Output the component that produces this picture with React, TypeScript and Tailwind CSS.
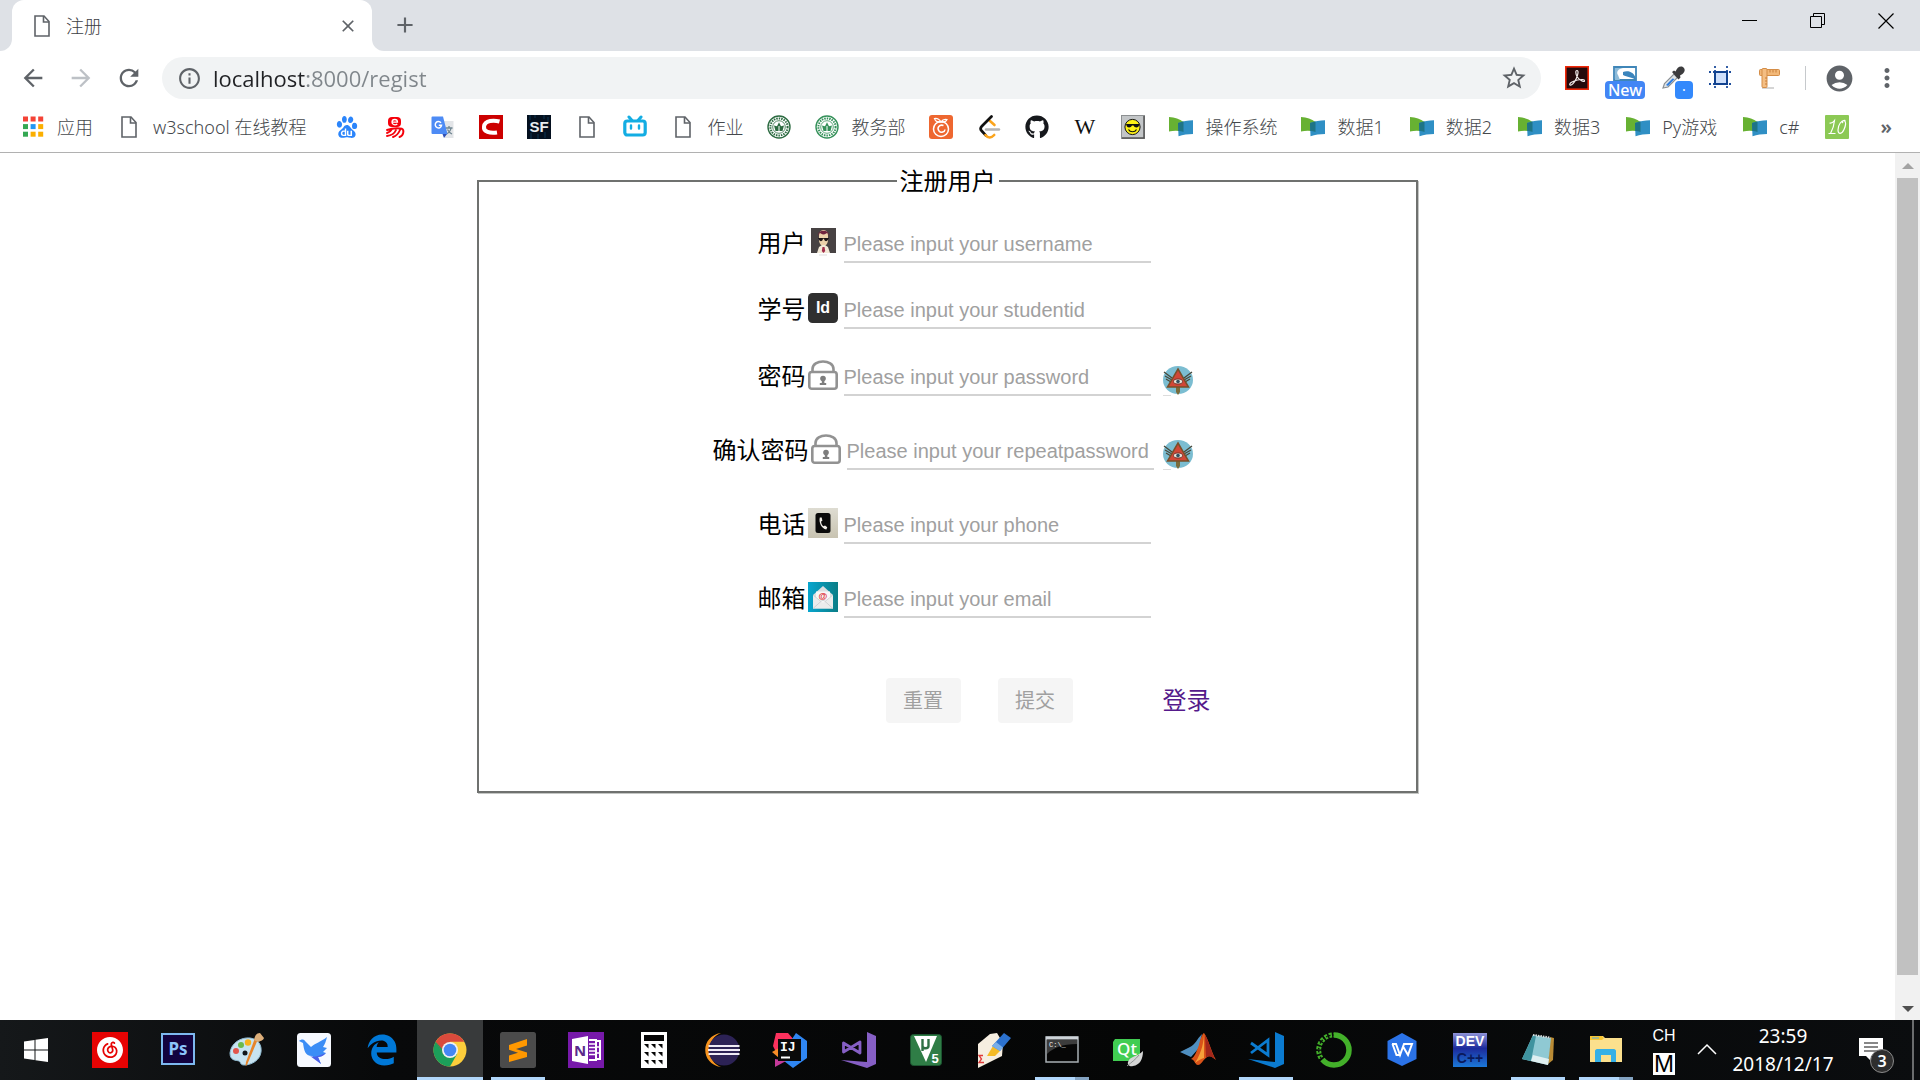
import type { ReactNode } from 'react';
import {
  MdAccountCircle,
  MdAdd,
  MdArrowBack,
  MdArrowForward,
  MdClose,
  MdInfoOutline,
  MdMoreVert,
  MdRefresh,
  MdStarBorder,
} from 'react-icons/md';
import { FaGithub } from 'react-icons/fa';
import { FaEdgeLegacy } from 'react-icons/fa6';
import { SiBaidu, SiNeteasecloudmusic } from 'react-icons/si';

function Svg({ size = 24, box = 24, children }: { size?: number; box?: number; children: ReactNode }) {
  return (
    <svg width={size} height={size} viewBox={`0 0 ${box} ${box}`} fill="none" aria-hidden="true">
      {children}
    </svg>
  );
}

/* ---------- bookmark icons ---------- */

const PageIcon = () => (
  <Svg>
    <path d="M5 2h9l5 5.5V22H5z" stroke="#5f6368" strokeWidth="1.6" />
    <path d="M13.5 2v6H19" stroke="#5f6368" strokeWidth="1.6" />
  </Svg>
);

const AppsIcon = () => {
  const colors = ['#f44336', '#f44336', '#f44336', '#34a853', '#2196f3', '#fbaf00', '#34a853', '#fbaf00', '#fbaf00'];
  return (
    <Svg>
      {colors.map((c, i) => (
        <rect key={i} x={2 + (i % 3) * 7.6} y={1.5 + Math.floor(i / 3) * 7.6} width="5" height="5" fill={c} />
      ))}
    </Svg>
  );
};

const YiIcon = () => (
  <Svg>
    <rect x="5" y="2" width="13" height="10" rx="4" fill="#f5000a" />
    <path d="M9 7.200h5.500c0-3.600-5.500-3.600-5.500 0 0 2.800 3.500 3.300 5.300 1.800" stroke="#fff" strokeWidth="1.300" />
    <path
      d="M4 15c4.500-1.500 11-2 15-1.200 2.500 1.200 1.500 7-2.500 8.200M9 14c-1 2-2.500 3.200-5 4M13 15c-1.500 3.500-5 5.500-9 6M17 15c-1.500 3.500-4 6-7 7"
      stroke="#f5000a"
      strokeWidth="1.900"
      strokeLinecap="round"
    />
  </Svg>
);

const TranslateIcon = () => (
  <Svg>
    <path d="M10 6h12.500v17H14z" fill="#e3e5e8" />
    <path d="M14.500 13h7M18 11v2M20 13c-.5 3-2.500 5-4.500 6M16.500 14.500c1 2 2.500 3.500 4.500 4.500" stroke="#6f8590" strokeWidth="1.300" />
    <path d="M11.500 19h4.500l-3 4z" fill="#2f4fb5" />
    <path d="M1.500 1.500h10.500l4.500 17.500H1.500a1 1 0 0 1-1-1v-15.500a1 1 0 0 1 1-1z" fill="#4d8bf5" />
    <path d="M10 7.800a3.200 3.200 0 1 0 .6 2.400H7.800" stroke="#fff" strokeWidth="1.400" />
  </Svg>
);

const CIcon = () => (
  <Svg>
    <rect width="24" height="24" fill="#cc0000" />
    <path d="M20.500 6.500C15 5 6 5 5 11.500c-.8 5.500 6 7 13 6" stroke="#fff" strokeWidth="4" />
  </Svg>
);

const SfIcon = () => (
  <Svg>
    <rect width="24" height="24" fill="#04101f" />
    <path d="M3 0v5M8 0v3M17 0v4M21 2v6M4 18v6M11 19v5M18 17v6" stroke="#0d3553" />
    <text x="12" y="17" textAnchor="middle" fontFamily="Liberation Sans" fontWeight="700" fontSize="15" fill="#e9edf0">
      SF
    </text>
  </Svg>
);

const BiliIcon = () => (
  <Svg>
    <path d="M6 2l3 3.500M18 2l-3 3.500" stroke="#13ade3" strokeWidth="3" strokeLinecap="round" />
    <rect x="1.800" y="6" width="20.400" height="14" rx="2.500" stroke="#13ade3" strokeWidth="3.200" />
    <path d="M8 10.500v3M16 10.500v3" stroke="#13ade3" strokeWidth="2.400" strokeLinecap="round" />
  </Svg>
);

const SealIcon = ({ color }: { color: string }) => (
  <Svg>
    <circle cx="12" cy="12" r="11" stroke={color} strokeWidth="1.400" />
    <circle cx="12" cy="12" r="8.600" stroke={color} strokeWidth="2" strokeDasharray="1.500 1" />
    <circle cx="12" cy="12" r="6.300" stroke={color} strokeWidth=".8" />
    <path d="M7 10.500l3 .8 2-4 2 4 3-.8-1.500 5.500h-7z" fill={color} />
    <path d="M12 11v5" stroke="#fff" />
  </Svg>
);

const FruitIcon = () => (
  <Svg>
    <rect width="24" height="24" rx="3" fill="#ee6730" />
    <circle cx="12" cy="14" r="7.500" stroke="#fff" strokeWidth="1.500" />
    <path d="M5.500 3.500c3.500-.5 5 1 6.500 3.500 1.500-2.500 3.500-3 6-2.500-1 2.500-3 3-6 2.500-3 .5-5.500-.5-6.500-3.500z" stroke="#fff" strokeWidth="1.200" />
    <path d="M14.500 10.500c-4-1.500-7 2.500-4.500 5.500 2 2.300 5.800 1 6-1.500" stroke="#fff" strokeWidth="1.500" />
  </Svg>
);

const LeetIcon = () => (
  <Svg>
    <path d="M13 6l4.500 4" stroke="#fba41c" strokeWidth="2.600" strokeLinecap="round" />
    <path d="M9 14.500h13" stroke="#b3b3b3" strokeWidth="2.400" strokeLinecap="round" />
    <path d="M14.500 1.500L4.800 11.300c-1.500 1.500-1.500 3.200 0 4.700l4 4.300" stroke="#111" strokeWidth="2.700" strokeLinecap="round" />
    <path d="M8.500 20c2.500 3.500 6 3 8.700 0" stroke="#fba41c" strokeWidth="2.600" strokeLinecap="round" />
  </Svg>
);

const WikiIcon = () => (
  <Svg>
    <text x="12" y="19" textAnchor="middle" fontFamily="Liberation Serif" fontSize="22" fill="#111">
      W
    </text>
  </Svg>
);

const SmileyIcon = () => (
  <Svg>
    <rect x=".5" y=".5" width="23" height="23" fill="#c3c6c8" stroke="#8d9092" />
    <path d="M1 23h22V1" stroke="#555" strokeWidth="1.500" />
    <circle cx="11.500" cy="12" r="7.600" fill="#fdf116" stroke="#111" />
    <path d="M5 9h13v1.500c-.5 2.500-4.500 2.500-5.500 0h-1.500c-1 2.500-5 2.500-5.500 0z" fill="#111" />
    <path d="M7.500 14.500c1.500 3 6.500 3 8 0" stroke="#111" strokeWidth="1.200" />
  </Svg>
);

const BookIcon = () => (
  <Svg>
    <path d="M0 2c6 .5 10.500 2 14.500 5v10C10 15.500 5 15.500 0 16.500z" fill="#67b132" />
    <path d="M9 8c5-2 10-2.500 15-2.800V19c-5 0-10 .800-14.500 2.200z" fill="#2f8fc4" />
    <path d="M9 8l5.500-1.600V17c-2-.8-3.500-1-5.300-1z" fill="#1e7486" />
  </Svg>
);

const TenIcon = () => (
  <Svg>
    <rect width="24" height="24" rx="1" fill="#8cc955" />
    <path d="M4.500 8c2 .5 3.500-.5 5-2.500C9 11 7.500 15 5.500 18.500M3.500 18.500h7" stroke="#fff" strokeWidth="1.200" />
    <path d="M20.500 5.500c-4-1-7.500 4.500-7.500 9.500 0 5 4 4 6-.5 1.800-4 2.500-8 0-9-1.500 0-2 1.500-1 2.500" stroke="#fff" strokeWidth="1.200" />
  </Svg>
);

const bookmarks: { label?: string; name: string; icon: ReactNode; pad?: string }[] = [
  { label: '应用', name: 'Apps', icon: <AppsIcon /> },
  { label: 'w3school 在线教程', name: 'w3school', icon: <PageIcon />, pad: 'pr-[5px]' },
  { name: 'Baidu', icon: <SiBaidu size={22} color="#2b85fb" /> },
  { name: 'Yi', icon: <YiIcon /> },
  { name: 'Translate', icon: <TranslateIcon /> },
  { name: 'C', icon: <CIcon /> },
  { name: 'SegmentFault', icon: <SfIcon /> },
  { name: 'Page', icon: <PageIcon /> },
  { name: 'Bilibili', icon: <BiliIcon /> },
  { label: '作业', name: 'Homework', icon: <PageIcon /> },
  { name: 'University', icon: <SealIcon color="#2c6b41" /> },
  { label: '教务部', name: 'Academic affairs', icon: <SealIcon color="#35915a" /> },
  { name: 'Pomegranate', icon: <FruitIcon /> },
  { name: 'LeetCode', icon: <LeetIcon /> },
  { name: 'GitHub', icon: <FaGithub size={24} color="#16181c" /> },
  { name: 'Wikipedia', icon: <WikiIcon /> },
  { name: 'Smiley', icon: <SmileyIcon /> },
  { label: '操作系统', name: 'Operating systems', icon: <BookIcon /> },
  { label: '数据1', name: 'Data 1', icon: <BookIcon />, pad: 'pr-0.5' },
  { label: '数据2', name: 'Data 2', icon: <BookIcon />, pad: 'pr-0.5' },
  { label: '数据3', name: 'Data 3', icon: <BookIcon />, pad: 'pr-0.5' },
  { label: 'Py游戏', name: 'Py games', icon: <BookIcon />, pad: 'pr-0.5' },
  { label: 'c#', name: 'C sharp', icon: <BookIcon />, pad: 'pr-0.5' },
  { name: 'Ten', icon: <TenIcon /> },
];

/* ---------- browser chrome ---------- */

function TabStrip() {
  return (
    <header className="flex h-[51px] bg-white">
      <div className="w-3 rounded-br-xl bg-[#dee1e6]" />
      <div className="bg-[#dee1e6]">
        <div className="flex h-full w-[360px] items-center rounded-t-xl bg-white pr-[14px] pl-[18px] text-lg text-[#3c4043]">
          <PageIcon />
          <span className="ml-3 flex-1 font-light">注册</span>
          <button aria-label="Close tab" className="text-[#5f6368]">
            <MdClose size={20} />
          </button>
        </div>
      </div>
      <div className="flex flex-1 items-start justify-between rounded-bl-xl bg-[#dee1e6]">
        <button aria-label="New tab" className="mt-3 ml-5 text-[#5f6368]">
          <MdAdd size={26} />
        </button>
        <div className="flex text-black">
          <button aria-label="Minimize" className="flex h-[42px] w-[68px] items-center justify-center">
            <Svg size={16} box={16}>
              <path d="M0 7.500h15" stroke="currentColor" />
            </Svg>
          </button>
          <button aria-label="Restore" className="flex h-[42px] w-[68px] items-center justify-center">
            <Svg size={16} box={16}>
              <path d="M.5 3.500h11v11H.5zM3.500 3.500v-3h11v11h-3" stroke="currentColor" />
            </Svg>
          </button>
          <button aria-label="Close" className="flex h-[42px] w-[68px] items-center justify-center">
            <Svg size={16} box={16}>
              <path d="M.5.5l15 15M15.500.5l-15 15" stroke="currentColor" strokeWidth="1.200" />
            </Svg>
          </button>
        </div>
      </div>
    </header>
  );
}

function Toolbar() {
  return (
    <div className="flex h-[54px] items-center bg-white pl-[19px] text-[#5f6368]">
      <button aria-label="Back">
        <MdArrowBack size={28} />
      </button>
      <button aria-label="Forward" className="ml-5 text-[#bdc1c6]">
        <MdArrowForward size={28} />
      </button>
      <button aria-label="Reload" className="ml-5">
        <MdRefresh size={28} />
      </button>
      <div className="ml-[19px] flex h-[42px] flex-1 items-center rounded-full bg-[#f1f3f4] pr-[13px] pl-[15px]">
        <MdInfoOutline size={25} />
        <input
          aria-label="Address"
          defaultValue="localhost:8000/regist"
          className="ml-[11px] min-w-0 flex-1 bg-[linear-gradient(90deg,#202124_94px,#80868b_94px)] bg-clip-text font-['Open_Sans'] text-[22px] text-transparent outline-none"
        />
        <button aria-label="Bookmark this page">
          <MdStarBorder size={28} />
        </button>
      </div>
      <div className="flex items-center gap-6 pl-6">
        <button aria-label="Acrobat">
          <Svg>
            <rect x=".8" y=".8" width="22.400" height="22.400" fill="#24090b" stroke="#f02708" strokeWidth="1.600" />
            <path
              d="M5 19c-1.500-1.500 3-4 7.500-5 4-.9 7.500-.5 7 1-.6 1.600-5-.8-7.200-4C10.500 8 10.300 4.500 12 4.500s1.200 3.800-.7 8C9.500 16.500 6.500 20 5 19z"
              stroke="#f0e9e9"
              strokeWidth="1.200"
            />
          </Svg>
        </button>
        <button aria-label="Snapshot" className="relative">
          <Svg>
            <path d="M1 1h22v13H1z" fill="#fff" stroke="#3f86b8" strokeWidth="1.800" />
            <path d="M2 2h8C5 3 3 6 5 9l2 5H2z" fill="#8dbbd9" />
            <path d="M10 6c5-2 12 0 13 8-4-3-9-3-13-5z" fill="#3b85bd" />
          </Svg>
          <span className="absolute top-[15px] left-[-8px] h-[18px] w-[40px] rounded-sm bg-[#4286f5] text-center font-['Noto_Sans'] text-base leading-[18px] font-medium text-white">
            New
          </span>
        </button>
        <button aria-label="Colour picker" className="relative">
          <Svg>
            <path d="M2 22l1.500-4.500L13 8l3.500 3.500L7 21z" fill="#dfe5e9" stroke="#8b9094" strokeWidth="1.200" />
            <path d="M5 19l6.500-6.500 2 .5L7 20z" fill="#2e7de0" />
            <path d="M11 6l2-1.500 1.500 1C16 2 18 0 21 .5c3.500 1.500 3.500 5 .5 7.500L19 9.500l.5 2-2 2z" fill="#3c3c3e" />
          </Svg>
          <span className="absolute top-[15px] left-[14px] h-[18px] w-[18px] rounded-sm bg-[#3389fc] text-center text-sm leading-[18px] text-white">
            ·
          </span>
        </button>
        <button aria-label="Page ruler">
          <Svg>
            <rect x="6" y="6" width="12" height="12" fill="#cfe0fb" />
            <path d="M0 6h24M0 18h24M6 0v24M18 0v24" stroke="#1f4e9c" strokeWidth="1.800" strokeDasharray="2 2" />
            <rect x="6" y="6" width="12" height="12" stroke="#124390" strokeWidth="2" />
          </Svg>
        </button>
        <button aria-label="Ruler">
          <Svg>
            <path d="M5 22h12" stroke="#d5d5d5" strokeWidth="2" />
            <rect x="2.500" y="3.500" width="20" height="6" rx="1" fill="#f2b878" stroke="#d48d47" />
            <rect x="5" y="2.500" width="5" height="19" rx="1" fill="#f4be83" stroke="#d48d47" />
            <path d="M13 4v2.500M16 4v2.500M19 4v2.500M8 12h2M8 15h2M8 18h2" stroke="#c77f3a" />
          </Svg>
        </button>
        <span className="h-6 w-px bg-[#c6c9cc]" />
      </div>
      <button aria-label="Profile" className="ml-[18px]">
        <MdAccountCircle size={31} />
      </button>
      <button aria-label="Menu" className="mr-[18px] ml-[17px]">
        <MdMoreVert size={30} />
      </button>
    </div>
  );
}

function BookmarkBar() {
  return (
    <nav className="flex h-12 items-center gap-6 border-b border-[#b1b1b1] bg-white pb-1 pl-[21px] whitespace-nowrap">
      {bookmarks.map((b) => (
        <a key={b.name} href="#" aria-label={b.label ?? b.name} className="flex shrink-0 items-center text-lg text-[#45484c]">
          <span className="flex size-6 items-center justify-center">{b.icon}</span>
          {b.label && <span className={`ml-3 leading-6 font-light ${b.pad ?? ''}`}>{b.label}</span>}
        </a>
      ))}
      <button aria-label="More bookmarks" className="mr-7 ml-auto text-xl leading-6 font-semibold text-[#5f6368]">
        »
      </button>
    </nav>
  );
}

/* ---------- registration form ---------- */

const UserPic = () => (
  <Svg size={30} box={30}>
    <rect x="3" y="1" width="25" height="25" fill="#474243" />
    <path d="M11 9c0-8 9-8 9 0v4c0 3-2 6-4.500 6S11 16 11 13z" fill="#ecd2ab" />
    <path d="M10 9c-.5-7 11.500-7 11 0l-1.500-3c-1.500 0-2 1.500-4 1.500S13 6 11.500 6z" fill="#70243e" />
    <path d="M11 11h3.800v1.800c-.8 1.800-3 1.800-3.800 0zM16.200 11H20v1.800c-.8 1.800-3 1.800-3.800 0z" fill="#1d1517" />
    <path d="M10 11.500h11" stroke="#1d1517" strokeWidth=".8" />
    <path d="M9 26l2-6 3-2h3l3 2 2 6z" fill="#f3ead8" />
    <path d="M14.500 20h2l.7 4-1.700 2-1.700-2z" fill="#a22e4c" />
    <path d="M11 28h8" stroke="#ddd" />
  </Svg>
);

const IdPic = () => (
  <Svg size={30} box={30}>
    <rect width="30" height="30" rx="4.500" fill="#2f2f2f" />
    <text x="15" y="20" textAnchor="middle" fontFamily="Liberation Sans Narrow, Liberation Sans" fontWeight="700" fontSize="16" fill="#fff">
      Id
    </text>
  </Svg>
);

const LockPic = () => (
  <Svg size={30} box={30}>
    <path d="M4.500 12V9c0-10 21-10 21 0v3" stroke="#929292" strokeWidth="2.600" />
    <rect x="1.300" y="12" width="27.400" height="16.700" rx="2.500" stroke="#929292" strokeWidth="2.600" />
    <circle cx="15" cy="18.500" r="2.800" fill="#7d7d7d" />
    <path d="M13.800 19h2.600v4h1.800v2h-6.400v-2h2z" fill="#7d7d7d" />
  </Svg>
);

const PhonePic = () => (
  <Svg size={30} box={30}>
    <defs>
      <linearGradient id="phoneBack" x1="0" y1="0" x2="0" y2="1">
        <stop stopColor="#dedcd2" />
        <stop offset="1" stopColor="#c8c3b1" />
      </linearGradient>
    </defs>
    <rect width="30" height="30" fill="url(#phoneBack)" />
    <rect x="7.500" y="5" width="15" height="20" rx="2.500" fill="#0a0a0a" />
    <path d="M11.800 9.500c-1.300 5 2 11.500 6.500 12l1-2.300-2.300-1.700-1.400.8c-1.500-1-2.600-3-2.500-4.800l1.300-.8-.7-3.200z" fill="#f2efe8" />
  </Svg>
);

const MailPic = () => (
  <Svg size={30} box={30}>
    <defs>
      <linearGradient id="mailBack">
        <stop stopColor="#08a6cf" />
        <stop offset="1" stopColor="#0a7d86" />
      </linearGradient>
    </defs>
    <rect width="30" height="30" fill="url(#mailBack)" />
    <path d="M5 13L15 4l10 9v13.500H5z" fill="#dcdfe0" />
    <path d="M8 9.500h14V18l-7 4-7-4z" fill="#f7f7f7" />
    <path d="M5 13l9 7.500h2L25 13v13.500H5z" fill="#ececec" />
    <path d="M5 26.500l9-8h2l9 8M5 13l8 6.500M25 13l-8 6.500" stroke="#c9cccd" strokeWidth=".8" />
    <text x="15" y="17" textAnchor="middle" fontFamily="Liberation Sans" fontWeight="700" fontSize="9" fill="#dc2b33">
      @
    </text>
  </Svg>
);

const EyePic = () => (
  <Svg size={30} box={30}>
    <ellipse cx="15" cy="14" rx="15" ry="14" fill="#7bbdd1" />
    <path d="M1 6l8 6M2 10l7 4M3 13l5 3M29 6l-8 6M28 10l-7 4M27 13l-5 3" stroke="#49483a" strokeWidth="1.300" />
    <path d="M13 21h4v5l-2 3-2-3z" fill="#7a6c3c" />
    <path d="M15 3l10.500 18H4.500z" fill="#d14736" stroke="#77502a" strokeWidth="1.500" />
    <ellipse cx="15" cy="15.500" rx="4.500" ry="2.500" fill="#e6e1d7" stroke="#5d2a22" strokeWidth=".8" />
    <circle cx="15" cy="15.500" r="1.800" fill="#2f4f60" />
    <path d="M0 29.500h8" stroke="#ddd" />
  </Svg>
);

const fields = [
  { id: 'username', label: '用户', pic: <UserPic />, type: 'text', gap: 'mt-0' },
  { id: 'studentid', label: '学号', pic: <IdPic />, type: 'text', gap: 'mt-[30px]' },
  { id: 'password', label: '密码', pic: <LockPic />, type: 'password', gap: 'mt-[31px]' },
  { id: 'repeatpassword', label: '确认密码', pic: <LockPic />, type: 'password', gap: 'mt-[38px]' },
  { id: 'phone', label: '电话', pic: <PhonePic />, type: 'tel', gap: 'mt-[38px]' },
  { id: 'email', label: '邮箱', pic: <MailPic />, type: 'email', gap: 'mt-[38px]' },
];

function RegisterForm() {
  return (
    <form className="flex-1 pt-4">
      <fieldset className="mx-auto w-full max-w-[941px] border-2 border-[#6f716f] pb-[68px] text-2xl text-black shadow-[1px_1px_0_#c4c6c4]">
        <legend className="mx-auto px-[3px] leading-6">注册用户</legend>
        <div className="mx-auto w-[490px] pt-[34px] pl-[10px]">
          {fields.map((f) => (
            <div key={f.id} className={`flex h-9 items-start ${f.gap}`}>
              <label htmlFor={f.id} className="min-w-[95px] shrink-0 pr-0.5 text-right leading-8 whitespace-nowrap">
                {f.label}
              </label>
              {f.pic}
              <input
                id={f.id}
                type={f.type}
                placeholder={`Please input your ${f.id}`}
                className="ml-1.5 h-9 w-[307px] border-b-2 border-[#d3d3d3] font-['Liberation_Sans'] text-xl outline-none placeholder:text-[#a0a0a0]"
              />
              {f.type === 'password' && (
                <button type="button" aria-label="Show password" className="ml-auto self-end">
                  <EyePic />
                </button>
              )}
            </div>
          ))}
          <div className="mt-[60px] flex items-center pl-[173px] whitespace-nowrap">
            <button type="reset" className="h-[45px] w-[75px] shrink-0 rounded-sm bg-[#f5f5f5] text-xl text-[#a0a0a0]">
              重置
            </button>
            <button type="submit" className="ml-[37px] h-[45px] w-[75px] shrink-0 rounded-sm bg-[#f5f5f5] text-xl text-[#a0a0a0]">
              提交
            </button>
            <a href="#login" className="ml-[90px] shrink-0 pb-0.5 text-[#551a8b]">
              登录
            </a>
          </div>
        </div>
      </fieldset>
    </form>
  );
}

function Scrollbar() {
  return (
    <div className="flex w-[25px] flex-col items-center bg-[#f1f1f1]">
      <div className="flex h-[25px] items-center">
        <Svg size={12} box={12}>
          <path d="M0 9l6-6 6 6z" fill="#a3a3a3" />
        </Svg>
      </div>
      <div className="w-[21px] flex-1 bg-[#c1c1c1]" />
      <div className="flex h-[45px] items-end pb-[5px]">
        <Svg size={12} box={12}>
          <path d="M0 3l6 6 6-6z" fill="#505050" />
        </Svg>
      </div>
    </div>
  );
}

/* ---------- taskbar icons (36 x 36) ---------- */

const A = ({ children }: { children: ReactNode }) => (
  <Svg size={36} box={36}>
    {children}
  </Svg>
);

const apps: { name: string; icon: ReactNode; state?: 'active' | 'open' | 'multi' }[] = [
  {
    name: 'NetEase Music',
    icon: (
      <span className="flex size-9 items-center justify-center bg-[#e60303]">
        <SiNeteasecloudmusic size={26} color="#fff" />
      </span>
    ),
  },
  {
    name: 'Photoshop',
    icon: (
      <A>
        <rect x="2" y="2" width="32" height="30" fill="#12023f" stroke="#7db8ef" strokeWidth="2" />
        <text x="18" y="23" textAnchor="middle" fontFamily="Noto Sans" fontWeight="700" fontSize="17" fill="#8cc5fb">
          Ps
        </text>
      </A>
    ),
  },
  {
    name: 'Paint',
    icon: (
      <A>
        <path d="M2 21C3 11 13 5 22 6c8 1 12 7 11 14-1 8-9 13-17 13-4 0-3-3-5-4-3-1-9 0-9-8z" fill="#c7e3f1" stroke="#93bfd6" />
        <circle cx="8" cy="19" r="3" fill="#e2564c" />
        <circle cx="13" cy="13" r="3" fill="#6cba4c" />
        <circle cx="20" cy="10.500" r="3.200" fill="#f8b21d" />
        <circle cx="17" cy="21" r="2.500" fill="#10161a" />
        <path d="M30 7L19 33l-1.500 1 .5-4L27 6z" fill="#e6852b" />
        <path d="M26 8c1-4 2-7 6-7l4 5c-1 3-4 3-6 4z" fill="#dcae7a" />
      </A>
    ),
  },
  {
    name: 'Thunder',
    icon: (
      <A>
        <rect x="1" y="1" width="34" height="34" rx="3.500" fill="#f6f9ff" />
        <path d="M3 9c2-2 5-2 6 0l6 6c4-4 10-5 16-10-1 4-2 7-4 10l4 1-4 4 3 1c-3 3-6 4-8 4l3 7-9-8C9 24 8 18 7 11z" fill="#3b8df6" />
        <path d="M14 24c4 2 8 0 16-3-3 3-6 4-8 4l3 7z" fill="#4b5fe8" />
      </A>
    ),
  },
  { name: 'Edge', icon: <FaEdgeLegacy size={32} color="#0078d7" /> },
  {
    name: 'Chrome',
    state: 'active',
    icon: (
      <A>
        <circle cx="18" cy="18" r="16.500" fill="#fccd3b" />
        <path d="M18 18L3.700 9.750A16.500 16.500 0 0 1 32.300 9.750H18z" fill="#d94a3c" />
        <path d="M3.700 9.750A16.500 16.500 0 0 0 18 34.500l7.100-12.400L18 18z" fill="#1c9f5a" />
        <path d="M3.700 9.750L11 22l7-4V9.750z" fill="#d94a3c" />
        <path d="M3.700 9.750L10.900 22.100 18 26z" fill="#1c9f5a" />
        <circle cx="18" cy="18" r="8" fill="#f1f1f1" />
        <circle cx="18" cy="18" r="6.300" fill="#4587f4" />
      </A>
    ),
  },
  {
    name: 'Sublime Text',
    state: 'open',
    icon: (
      <A>
        <rect width="36" height="36" rx="2.500" fill="#4b4b4b" />
        <path d="M9 13l18-6v6.500L16 17l11 3.500V25L9 30v-6.500l9-2.800-9-3z" fill="#ff9800" />
      </A>
    ),
  },
  {
    name: 'OneNote',
    icon: (
      <A>
        <rect width="36" height="36" fill="#7719aa" />
        <path d="M4 7l16-3v28L4 29z" fill="#fff" />
        <path d="M21 8h7v20h-7M28 9h4v18h-4" stroke="#fff" strokeWidth="2" />
        <path d="M21 12h6M21 15.500h6M21 19h6M21 22.500h6M29 15h3M29 21h3" stroke="#fff" strokeWidth="1.500" />
        <text x="12" y="24" textAnchor="middle" fontFamily="Noto Sans" fontWeight="700" fontSize="15" fill="#5b2a8c">
          N
        </text>
      </A>
    ),
  },
  {
    name: 'Calculator',
    icon: (
      <A>
        <rect x="5" width="26" height="36" fill="#fff" />
        <rect x="8" y="3" width="20" height="6" fill="#050505" />
        {[12, 20, 28].map((y) => (
          <path key={y} d={`M8 ${y}h4.500v4.500zM15 ${y}h4.500v4.500zM22 ${y}h4.500v4.500z`} fill="#050505" />
        ))}
      </A>
    ),
  },
  {
    name: 'Eclipse',
    icon: (
      <A>
        <path d="M17 1C-4 4-4 32 17 35 2 30 2 6 17 1z" fill="#f7941e" />
        <circle cx="20" cy="18" r="15.500" fill="#2c2255" />
        <path d="M4.500 14h31M4 18h32M4.500 22h31" stroke="#eeeaf5" strokeWidth="2" />
      </A>
    ),
  },
  {
    name: 'IntelliJ IDEA',
    icon: (
      <A>
        <path d="M4 1h12l6 7-6 12-9 6-6-12z" fill="#fc315d" />
        <path d="M0 20l7-4v10z" fill="#f78c27" />
        <path d="M20 7l4-6 11 8v17l-14 10-9-7z" fill="#2f86f2" />
        <path d="M3 27l11 2-11 6z" fill="#c53a9a" />
        <rect x="6" y="7" width="23" height="22" fill="#0a0a0a" />
        <text x="8" y="19" fontFamily="Liberation Mono" fontWeight="700" fontSize="13" fill="#fff">
          IJ
        </text>
        <path d="M9 25.500h9" stroke="#fff" strokeWidth="2" />
      </A>
    ),
  },
  {
    name: 'Visual Studio',
    icon: (
      <A>
        <path d="M27 0l9 4v28l-9 4L1 28l26 2z" fill="#865fc5" />
        <path d="M3.500 11v9L20 10v11z" stroke="#865fc5" strokeWidth="2.800" strokeLinejoin="round" />
      </A>
    ),
  },
  {
    name: 'Keil',
    icon: (
      <A>
        <rect x="2.500" y="2.500" width="31" height="31" rx="3" fill="#2f7d46" stroke="#1c5530" />
        <path d="M6 4h23L18 30z" fill="#fff" />
        <path d="M14.500 7v12M14.500 14c0 3 6 3 6 0V7" stroke="#2f6f44" strokeWidth="2.400" />
        <text x="27" y="31" textAnchor="middle" fontFamily="Liberation Sans" fontWeight="700" fontSize="13" fill="#fff">
          5
        </text>
      </A>
    ),
  },
  {
    name: 'MathType',
    icon: (
      <A>
        <path d="M2 12L14 2l7-1 6 10-1 13L6 34l-4 2z" fill="#f6eee0" />
        <path d="M11 24l6-10 7 5-5 5z" fill="#f5bb27" />
        <path d="M16 14l12-13 7 5-11 13z" fill="#2c72cf" />
        <path d="M16 14l4-4 7 5.500-3 3.500z" fill="#79aee8" />
        <path d="M7 23.500H3l2.500 3.500L3 30.500h5" stroke="#e03a3a" strokeWidth="1.300" />
      </A>
    ),
  },
  {
    name: 'Command Prompt',
    state: 'multi',
    icon: (
      <A>
        <rect x="2" y="5" width="32" height="25" fill="#060606" stroke="#a9b0b5" strokeWidth="1.500" />
        <path d="M2 6h32" stroke="#cdd3d8" strokeWidth="3" />
        <path d="M3 8h30v4C18 12 9 16 3 22z" fill="#3c3c3c" />
        <text x="5" y="15" fontFamily="Liberation Mono" fontSize="7" fill="#eee">
          C:\_
        </text>
      </A>
    ),
  },
  {
    name: 'Qt Creator',
    icon: (
      <A>
        <path d="M3 7h25v22H1V10z" fill="#41cd52" />
        <text x="15" y="23" textAnchor="middle" fontFamily="Noto Sans" fontWeight="500" fontSize="17" fill="#fff">
          Qt
        </text>
        <path d="M31 19c0 8-3 14-10 15-3 1-6-1-5-4 2-6 9-5 15-11z" fill="#d5d6d6" />
        <path d="M15 34c5-4 9-7 12-11" stroke="#8f9392" />
      </A>
    ),
  },
  {
    name: 'MATLAB',
    icon: (
      <A>
        <path d="M0 20l10-5c5-2 7-8 12-13l-3 14-8 9z" fill="#4f8fc0" />
        <path d="M11 27c4-2 6-9 8-14 1-5 3-11 5-12 4 5 7 18 12 27-4-3-6-5-9-3-4 3-6 8-9 8s-3-5-7-6z" fill="#d95319" />
        <path d="M24 1c0 8-2 19-9 30 4-3 6-4 9-5z" fill="#f7a13a" />
        <path d="M25 3c5 9 6 16 10 24-5-4-8-3-9-1z" fill="#a3271b" />
      </A>
    ),
  },
  {
    name: 'Visual Studio Code',
    state: 'open',
    icon: (
      <A>
        <path d="M27 0l9 4v28l-9 4L0 27l27 3z" fill="#0b7bd0" />
        <path d="M3 11l17 12V8L3 21" stroke="#0b7bd0" strokeWidth="2.800" />
      </A>
    ),
  },
  {
    name: 'Anaconda',
    icon: (
      <A>
        <circle cx="18" cy="18" r="15" stroke="#43b02a" strokeWidth="5.500" strokeDasharray="60 34.200" transform="rotate(-90 18 18)" />
        <path d="M5 26A15 15 0 0 1 18 3" stroke="#43b02a" strokeWidth="5" strokeDasharray="3 1.500" />
        <path d="M5 26A15 15 0 0 1 18 3" stroke="#0a0b0c" strokeWidth="1.400" strokeDasharray="1.500 1.500" />
      </A>
    ),
  },
  {
    name: 'WPS Writer',
    icon: (
      <A>
        <path d="M18 1l14.500 8v18L18 34 3.500 27V9z" fill="#2b73e8" />
        <path d="M8 12h4l4 11 4-11h8l-4 11-5-8.500" stroke="#fff" strokeWidth="2" />
        <path d="M8.500 12l4 11h4" stroke="#fff" strokeWidth="2" />
      </A>
    ),
  },
  {
    name: 'Dev-C++',
    icon: (
      <span className="flex size-[34px] flex-col items-center bg-[linear-gradient(#8f93d8,#1c2a9c_45%,#1b78d8)] font-['Liberation_Sans'] text-sm font-bold">
        <span className="leading-[17px] text-white">DEV</span>
        <span className="leading-[17px] text-[#0a1a5c]">C++</span>
      </span>
    ),
  },
  {
    name: 'Notepad',
    state: 'open',
    icon: (
      <A>
        <path d="M30 5l4 1-1 22-5 4z" fill="#b98b35" />
        <path d="M13 3l18 3-3 27L2 27z" fill="#8fc9d3" />
        <path d="M13 3L2 27l9 2 5-25z" fill="#3f939f" />
        <path d="M11 29l17 4 1-6-16-4z" fill="#dfeff1" />
        <path d="M13 3l17 2.500" stroke="#d7dcdd" strokeWidth="2" strokeDasharray="1.500 1" />
      </A>
    ),
  },
  {
    name: 'File Explorer',
    state: 'multi',
    icon: (
      <A>
        <path d="M2 4h13l2 2h17v24H2z" fill="#fbe08d" />
        <path d="M2 4h12l2 2-2 2H2z" fill="#f8c632" />
        <path d="M4 6h7" stroke="#58a9d8" />
        <path d="M7 30V19c0-1 1-2 2-2h17c1 0 2 1 2 2v11h-5v-7H13v7z" fill="#35b0e6" />
      </A>
    ),
  },
];

function Taskbar() {
  return (
    <footer className="flex h-[60px] bg-[linear-gradient(90deg,#15181a,#08090a_20%,#050606_60%,#0b0d0f)] text-white">
      <button aria-label="Start" className="flex w-[76px] items-center justify-center pr-1">
        <Svg>
          <path d="M0 3.500L10.500 2v9.500H0zM11.500 1.800L24 0v11.500H11.500zM0 12.500h10.500V22L0 20.500zM11.500 12.500H24V24l-12.500-1.800z" fill="#fff" />
        </Svg>
      </button>
      {apps.map((app) => (
        <button
          key={app.name}
          aria-label={app.name}
          className={`relative flex w-[68px] items-center justify-center border-x ${
            app.state === 'active' ? 'border-transparent bg-[#383a3b] bg-clip-padding' : 'border-transparent'
          }`}
        >
          {app.icon}
          {app.state === 'active' && <span className="absolute inset-x-0 bottom-0 h-[3px] bg-[#b0d6fa]" />}
          {app.state === 'open' && <span className="absolute inset-x-1.5 bottom-0 h-[3px] bg-[#b0d6fa]" />}
          {app.state === 'multi' && (
            <span className="absolute inset-x-1.5 bottom-0 h-[3px] border-r-[14px] border-[#83a3c2] bg-[#b0d6fa]" />
          )}
        </button>
      ))}
      <div className="ml-auto flex items-center">
        <div className="flex w-6 flex-col items-center gap-[7px] font-['Liberation_Sans']">
          <span className="text-base leading-5">CH</span>
          <span className="flex size-[22px] items-center justify-center bg-white text-2xl leading-5 text-black">M</span>
        </div>
        <button aria-label="Show hidden icons" className="ml-[21px]">
          <Svg size={20} box={20}>
            <path d="M1 14l9-9 9 9" stroke="#fff" strokeWidth="1.500" />
          </Svg>
        </button>
        <div className="ml-[13px] w-[106px] text-center font-['Noto_Sans'] text-[19px] leading-7">
          <div>23:59</div>
          <div>2018/12/17</div>
        </div>
        <button aria-label="Notifications" className="relative ml-[22px]">
          <Svg size={26} box={26}>
            <path d="M1 1h24v18H13v5l-5-5H1z" fill="#fff" />
            <path d="M6 6h14M6 10h14M6 14h14" stroke="#111" strokeWidth="1.200" />
          </Svg>
          <span className="absolute top-3 left-3 flex size-6 items-center justify-center rounded-full border border-[#8a8a8a] bg-[#2e2e2e] font-['Noto_Sans'] text-base leading-6 font-semibold">
            3
          </span>
        </button>
        <span className="mr-1.5 ml-[28px] h-[60px] w-0.5 bg-[#6a6c6d]" />
      </div>
    </footer>
  );
}

export default function App() {
  return (
    <div className="flex min-h-screen flex-col bg-white font-['Noto_Sans','Noto_Sans_CJK_SC',sans-serif]">
      <TabStrip />
      <Toolbar />
      <BookmarkBar />
      <main className="flex flex-1">
        <RegisterForm />
        <Scrollbar />
      </main>
      <Taskbar />
    </div>
  );
}
